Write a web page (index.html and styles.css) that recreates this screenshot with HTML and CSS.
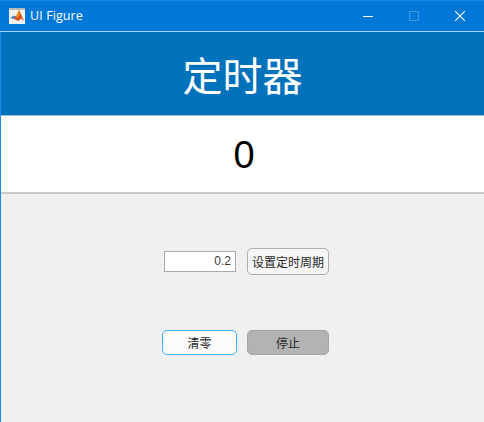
FILE: index.html
```html
<!DOCTYPE html>
<html lang="zh">
<head>
<meta charset="utf-8">
<title>UI Figure</title>
<link rel="stylesheet" href="styles.css">
</head>
<body>
<div class="window">
  <div class="titlebar">
    <svg class="app-icon" width="16" height="16" viewBox="0 0 16 16">
      <rect x="0" y="0" width="16" height="16" fill="#f4f2ee"/>
      <rect x="0" y="0" width="16" height="2" fill="#b9b9b9"/>
      <path d="M1 10 L5 7.5 L7 8.5 L5 11 Z" fill="#4a7fb5"/>
      <path d="M5 11 L7 8 L10 2 L11.5 5 L15 13 L12 10.5 L9.5 13 Z" fill="#d8501c"/>
      <path d="M7 8 L10 2 L10.5 7 L8 10 Z" fill="#f0a020"/>
    </svg>
    <span class="title">UI Figure</span>
    <div class="controls">
      <svg class="ctl" width="10" height="10" viewBox="0 0 10 10"><path d="M0 5.5H10" stroke="#fff" fill="none"/></svg>
      <svg class="ctl" width="10" height="10" viewBox="0 0 10 10"><rect x=".5" y=".5" width="9" height="9" stroke="#3d97e4" fill="none"/></svg>
      <svg class="ctl" width="10" height="10" viewBox="0 0 10 10"><path d="M0 0L10 10M10 0L0 10" stroke="#fff" stroke-width="1.1" fill="none"/></svg>
    </div>
  </div>
  <div class="content">
    <div class="heading">定时器</div>
    <div class="counter">0</div>
    <div class="panel">
      <div class="row row-period">
        <input class="field" type="text" value="0.2">
        <button class="btn btn-set">设置定时周期</button>
      </div>
      <div class="row row-actions">
        <button class="btn btn-clear">清零</button>
        <button class="btn btn-stop">停止</button>
      </div>
    </div>
  </div>
</div>
</body>
</html>
```
FILE: styles.css
```css
* { box-sizing: border-box; }
html, body { margin: 0; height: 100%; }
body { font-family: "Liberation Sans", "Noto Sans CJK SC", sans-serif; background: #f0f0f0; overflow: hidden; }
.window { width: 484px; height: 422px; display: flex; flex-direction: column; border-left: 1px solid #1a8ae6; }
.titlebar { height: 32px; flex: none; display: flex; align-items: center; background: #0078d7; border-top: 1px solid #1a86de; border-bottom: 1px solid #a6d2f2; color: #fff; margin-left: -1px; padding-left: 9px; padding-bottom: 1px; }
.app-icon { flex: none; }
.title { margin-left: 5px; font-family: "Open Sans", "Noto Sans", sans-serif; font-size: 12.5px; letter-spacing: .1px; }
.controls { margin-left: auto; display: flex; padding-right: 19px; }
.ctl { width: 10px; height: 10px; margin-left: 36px; }
.ctl:first-child { margin-left: 0; }
.content { flex: 1; display: flex; flex-direction: column; }
.heading { height: 84px; flex: none; background: #0072bc; border-bottom: 1px solid #9dbcd4; color: #fff; font-size: 40px; display: flex; align-items: center; justify-content: center; }
.counter { height: 78px; flex: none; background: #fff; border-bottom: 2px solid #c8c8c8; color: #000; font-size: 38px; display: flex; align-items: center; justify-content: center; padding: 3px 0 0 3px; }
.panel { flex: 1; background: #f0f0f0; padding-top: 53px; }
.row { display: flex; align-items: center; padding-left: 161px; }
.row-period { height: 28px; padding-left: 163px; }
.row-actions { margin-top: 54px; height: 26px; }
.field { width: 72px; height: 21px; border: 1px solid #a9a9a9; background: #fff; color: #3c3c3c; font: 12px "Liberation Sans", sans-serif; text-align: right; padding: 0 4px 0 0; outline: none; }
.btn { font: 12px "Liberation Sans", "Noto Sans CJK SC", sans-serif; color: #262626; border-radius: 5px; padding: 0; background: #f6f6f6; border: 1px solid #adadad; }
.btn-set { width: 82px; height: 27px; margin-left: 11px; }
.btn-clear { width: 75px; height: 25px; background: #fcfcfc; border-color: #3daeef; }
.btn-stop { width: 82px; height: 25px; margin-left: 10px; background: #b3b3b3; border-color: #a6a6a6; }
```
